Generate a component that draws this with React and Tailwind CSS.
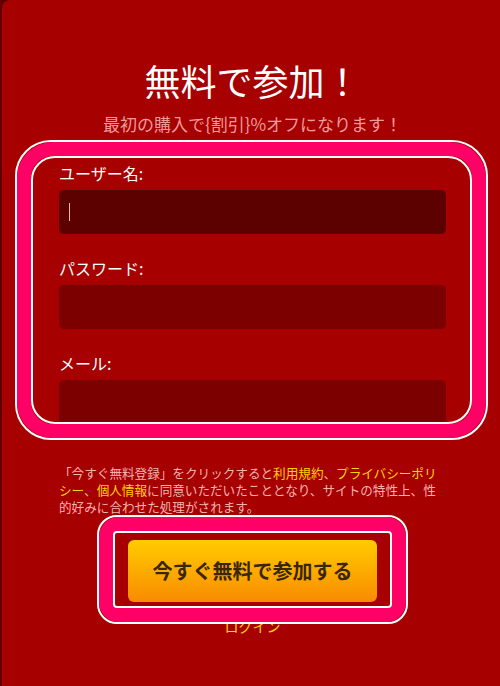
import React from "react";

const FONT = { fontFamily: '"Noto Sans CJK JP", "Noto Sans", sans-serif' };

/** Pink outlined highlight drawn over content */
function Highlight({ className, outer, inner }) {
  return (
    <div className={`absolute pointer-events-none border-2 border-white ${outer} ${className}`}>
      <div className={`h-full w-full border-[14px] border-[#ff0066] ${outer}`}>
        <div className={`h-full w-full border-2 border-white ${inner}`} />
      </div>
    </div>
  );
}

function Field({ label, focused }) {
  return (
    <div>
      <div className="text-[16px] leading-[22px] text-white">{label}</div>
      <div
        className={`mt-[6px] h-[44px] rounded-[5px] flex items-center px-[10px] ${
          focused ? "bg-[#5c0000]" : "bg-[#7c0000]"
        }`}
      >
        {focused && <div className="w-px h-[18px] bg-[#e8b4b4]" />}
      </div>
    </div>
  );
}

export default function App() {
  return (
    <div className="w-full h-[686px] bg-[#5e0000] pl-[2px] overflow-hidden" style={FONT}>
      <div className="relative h-full bg-[#a60000] rounded-tl-[8px]">
        <div className="ml-[57px] w-[387px] pt-[55px]">
          <h1 className="text-center text-white text-[36px] leading-[50px]">無料で参加！</h1>
          <p className="mt-[7px] text-center text-[#f19a9a] text-[17px] leading-[24px]">
            最初の購入で{"{割引}"}%オフになります！
          </p>

          <div className="mt-[26px] flex flex-col gap-[23px]">
            <Field label="ユーザー名:" focused />
            <Field label="パスワード:" />
            <Field label="メール:" />
          </div>

          <p className="mt-[40px] text-[12.6px] leading-[17px] text-[#f4b3b3]">
            「今すぐ無料登録」をクリックすると
            <span className="text-[#ffd400]">利用規約</span>、
            <span className="text-[#ffd400]">プライバシーポリシー</span>、
            <span className="text-[#ffd400]">個人情報</span>
            に同意いただいたこととなり、サイトの特性上、性的好みに合わせた処理がされます。
          </p>

          <div className="mt-[25px] flex justify-center">
            <button className="w-[249px] h-[62px] rounded-[6px] bg-gradient-to-b from-[#ffcc00] to-[#f88a00] text-[#3a2600] text-[20px] font-bold">
              今すぐ無料で参加する
            </button>
          </div>

          <div className="mt-[14px] text-center text-[#ffd400] text-[14px] leading-[20px]">ログイン</div>
        </div>

        <Highlight
          className="left-[13px] top-[140px] w-[473px] h-[300px]"
          outer="rounded-[36px]"
          inner="rounded-[24px]"
        />
        <Highlight
          className="left-[95px] top-[515px] w-[311px] h-[109px]"
          outer="rounded-[20px]"
          inner="rounded-[4px]"
        />
      </div>
    </div>
  );
}
